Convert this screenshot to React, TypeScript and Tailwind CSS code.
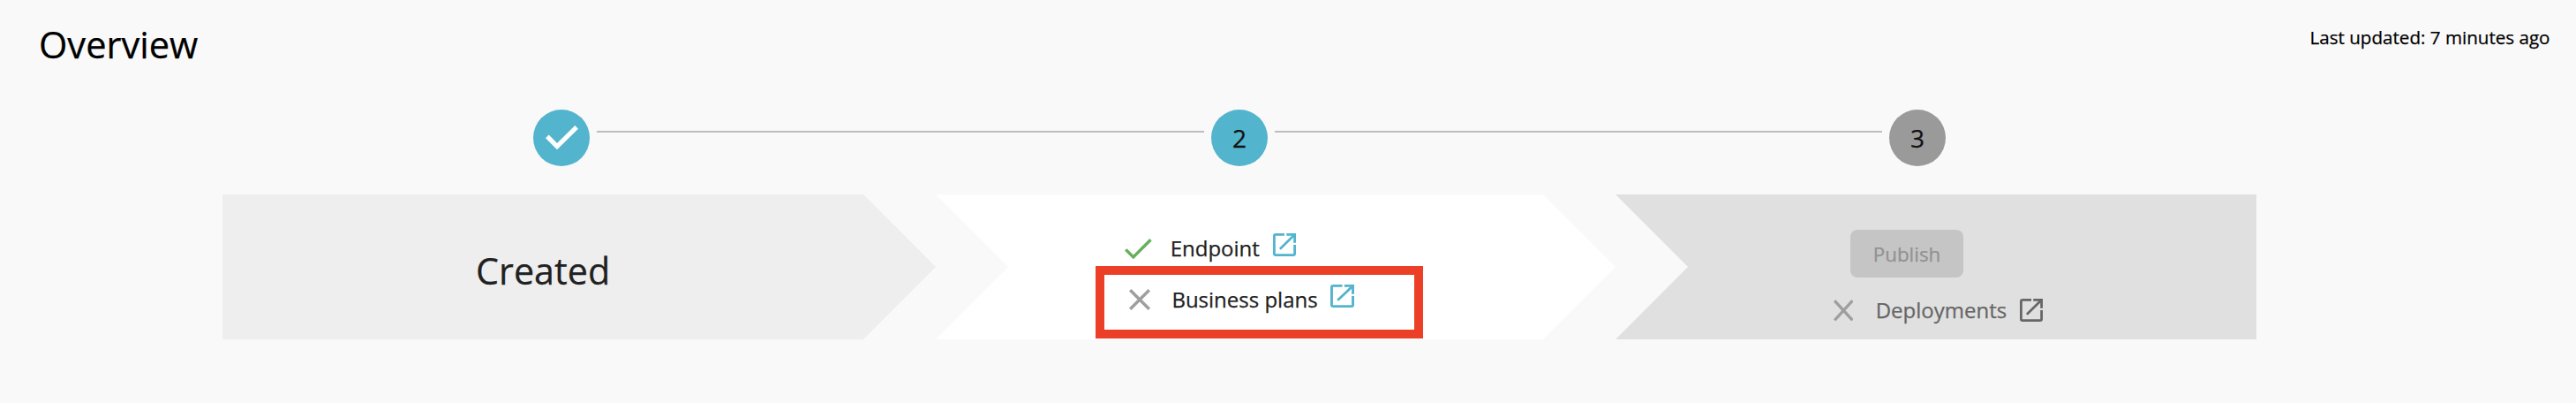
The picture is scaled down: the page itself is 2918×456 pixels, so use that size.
import type { ReactNode } from "react";

function CheckIcon({ className }: { className: string }) {
  return (
    <svg viewBox="3.4 5.6 17.6 13.4" preserveAspectRatio="none" fill="currentColor" className={className}>
      <path d="M9 16.2 4.8 12l-1.4 1.4L9 19 21 7l-1.4-1.4z" />
    </svg>
  );
}

function BoldCheckIcon() {
  return (
    <svg viewBox="0 0 37 27.3" fill="currentColor" className="-mt-[1px] h-[27.3px] w-[37px] text-white">
      <path d="M33.3 0 37 3.7 13 27.3 0 14.3l3.7-3.7L13 20z" />
    </svg>
  );
}

function CrossIcon({ className }: { className: string }) {
  return (
    <svg viewBox="0 0 24 24" preserveAspectRatio="none" fill="none" stroke="currentColor" strokeWidth="3.4" className={className}>
      <path d="M1.2 1.2 22.8 22.8M22.8 1.2 1.2 22.8" />
    </svg>
  );
}

function OpenIcon({ className }: { className: string }) {
  return (
    <svg viewBox="0 0 26 26" preserveAspectRatio="none" fill="none" stroke="currentColor" strokeWidth="2.8" className={className}>
      <path d="M13 1.4H3Q1.4 1.4 1.4 3V23Q1.4 24.6 3 24.6H23Q24.6 24.6 24.6 23V13" />
      <path d="M15.3 1.4H24.6V10.7" />
      <path d="M7.9 17.8 24.2 1.8" strokeWidth="2.7" />
    </svg>
  );
}

function Circle({ className, children }: { className: string; children: ReactNode }) {
  return (
    <div className={`flex size-16 shrink-0 items-center justify-center rounded-full text-[28px] leading-[38px] text-[#111111] ${className}`}>
      {children}
    </div>
  );
}

function Connector() {
  return <div className="mx-2 mt-6 h-[2px] flex-1 self-start bg-[#bdbdbd]" />;
}

export default function App() {
  return (
    <div className="h-[456px] w-[2918px] overflow-hidden bg-[#f9f9f9] font-['Open_Sans','Noto_Sans',sans-serif] text-black [-webkit-text-stroke:0.25px_currentColor]">
      <header className="flex h-[124px] items-start justify-between pr-[29.5px] pl-[44px]">
        <h1 className="mt-5 text-[41.6px] leading-[60px]">Overview</h1>
        <p className="mt-7 text-[20.6px] leading-[28px]">Last updated: 7 minutes ago</p>
      </header>

      <div className="ml-[604px] flex w-[1600px] items-center">
        <Circle className="bg-[#53b4cd]">
          <BoldCheckIcon />
        </Circle>
        <Connector />
        <Circle className="bg-[#53b4cd]">2</Circle>
        <Connector />
        <Circle className="bg-[#9a9a9a]">3</Circle>
      </div>

      <div className="mt-8 ml-[252px] flex h-[164px] w-[2304px] text-[24px] leading-[32px] whitespace-nowrap">
        <section className="w-[808px] bg-[#eeeeee] pt-14 pl-[287px] text-[#212121] [clip-path:polygon(0_0,726px_0,100%_50%,726px_100%,0_100%)]">
          <h2 className="text-[41.3px] leading-[60px]">Created</h2>
        </section>

        <section className="w-[770px] bg-white pt-10 pl-[181px] text-[#212121] [clip-path:polygon(0_0,688px_0,100%_50%,688px_100%,0_100%,82px_50%)]">
          <div className="flex h-[41px] items-center pl-[33px]">
            <CheckIcon className="mt-[2px] h-[23.3px] w-[30.7px] text-[#66af5b]" />
            <span className="ml-[21px]">Endpoint</span>
            <OpenIcon className="mb-[7px] ml-[15.1px] h-[26px] w-[26px] text-[#53b4cd]" />
          </div>
          <div className="flex h-[82px] w-[371px] items-center border-10 border-[#eb4027] pb-[7px] pl-[28px]">
            <CrossIcon className="mt-[1px] h-[24px] w-[24px] text-[#9e9e9e]" />
            <span className="ml-[24.4px]">Business plans</span>
            <OpenIcon className="mb-[6.5px] ml-[14px] h-[26px] w-[27px] text-[#53b4cd]" />
          </div>
        </section>

        <section className="w-[726px] bg-[#e0e0e0] pt-10 [clip-path:polygon(0_0,100%_0,100%_100%,0_100%,82px_50%)]">
          <button disabled className="ml-[266px] flex h-[54px] w-32 items-center justify-center rounded-lg bg-[#c5c5c5] pt-[1px] text-[22.4px] text-[#929292]">
            Publish
          </button>
          <div className="flex h-[73px] items-center pl-[246.7px] text-[#666666]">
            <CrossIcon className="mt-[1px] h-[24.6px] w-[22.6px] text-[#9e9e9e]" />
            <span className="ml-[25.4px]">Deployments</span>
            <OpenIcon className="mt-[1px] ml-[14.8px] h-[26px] w-[26px]" />
          </div>
        </section>
      </div>
    </div>
  );
}
